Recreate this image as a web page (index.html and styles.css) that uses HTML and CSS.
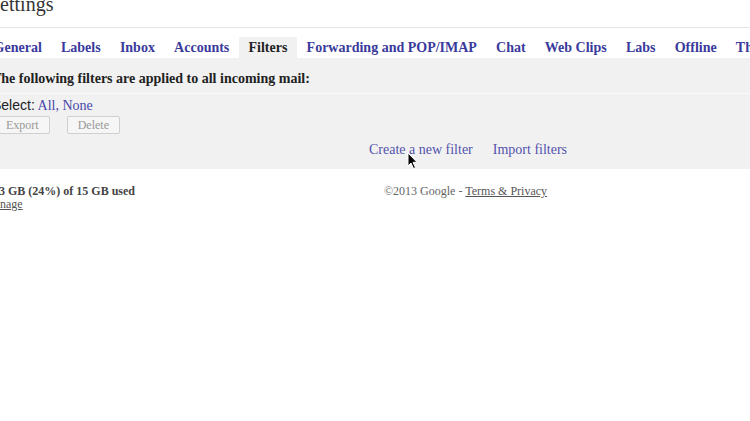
FILE: index.html
```html
<!DOCTYPE html>
<html lang="en">
<head>
    <meta charset="UTF-8">
    <title>Settings</title>
    <link rel="stylesheet" href="styles.css">
</head>
<body>
    <div class="page">
        <div class="header">
            <h1 class="title">Settings</h1>
        </div>

        <div class="tabs">
            <a class="tab">General</a>
            <a class="tab">Labels</a>
            <a class="tab">Inbox</a>
            <a class="tab">Accounts</a>
            <a class="tab active">Filters</a>
            <a class="tab">Forwarding and POP/IMAP</a>
            <a class="tab">Chat</a>
            <a class="tab">Web Clips</a>
            <a class="tab">Labs</a>
            <a class="tab">Offline</a>
            <a class="tab">Themes</a>
        </div>

        <div class="panel">
            <div class="panel-head">The following filters are applied to all incoming mail:</div>
            <div class="select-row">
                <span class="select-label">Select:</span>
                <a class="link">All</a>, <a class="link">None</a>
            </div>
            <div class="actions">
                <button class="btn" disabled>Export</button>
                <button class="btn" disabled>Delete</button>
            </div>
            <div class="filter-links">
                <a class="link">Create a new filter</a>
                <a class="link">Import filters</a>
            </div>
        </div>

        <div class="footer">
            <div class="usage">
                <div class="used">3.63 GB (24%) of 15 GB used</div>
                <a class="manage">Manage</a>
            </div>
            <div class="legal">&copy;2013 Google - <a class="terms">Terms &amp; Privacy</a></div>
        </div>
    </div>

    <!-- mouse pointer over the links -->
    <svg class="cursor" width="12" height="18" viewBox="0 0 12 18">
        <path d="M1 1 L1 14 L4 11 L6.5 16.5 L8.5 15.6 L6 10.3 L10 10.3 Z" fill="#000" stroke="#fff" stroke-width="1"/>
    </svg>
</body>
</html>
```

FILE: styles.css
```css
body {
    margin: 0;
    font-family: "Liberation Serif", "Times New Roman", serif;
    background: #fff;
    color: #222;
    overflow: hidden;
    width: 750px;
    height: 421px;
    position: relative;
}
.page {
    margin-left: -8px;
    width: 900px;
}
.header {
    display: flow-root;
    height: 27px;
    border-bottom: 1px solid #e6e6e6;
}
.title {
    margin: -6px 0 0 -3px;
    font-size: 20px;
    line-height: 20px;
    font-weight: normal;
    color: #333;
}
.tabs {
    display: flex;
    margin: 9px 0 0 -8px;
    white-space: nowrap;
}
.tab {
    padding: 0 9.6px;
    height: 21px;
    line-height: 21px;
    font-size: 14px;
    font-weight: bold;
    color: #3a3a9c;
}
.tab.active {
    background: #f1f1f1;
    color: #222;
}
.panel {
    background: #f1f1f1;
    height: 110px;
    padding-top: 1px;
}
.panel-head {
    font-size: 14px;
    font-weight: bold;
    color: #222;
    margin-top: 12px;
    padding-bottom: 6px;
    border-bottom: 1px solid #fafafa;
    line-height: 16px;
}
.select-row {
    font-size: 14px;
    line-height: 16px;
    margin-top: 3px;
    color: #4848a8;
}
.select-label {
    font-family: "Liberation Sans", Arial, sans-serif;
    font-size: 14px;
    color: #222;
}
.link {
    color: #4848a8;
}
.actions {
    display: flex;
    gap: 17px;
    margin: 2px 0 0 3px;
}
.btn {
    height: 18px;
    padding: 0 10px;
    font-family: "Liberation Serif", "Times New Roman", serif;
    font-size: 12px;
    color: #999;
    background: #f6f6f6;
    border: 1px solid #d0d0d0;
    border-radius: 2px;
}
.filter-links {
    display: flex;
    gap: 20px;
    margin: 8px 0 0 377px;
    font-size: 14px;
    line-height: 16px;
}
.filter-links .link {
    color: #5353ad;
}
.footer {
    display: grid;
    grid-template-columns: 400px auto;
    margin: 16px 0 0 -8px;
    font-size: 12px;
    line-height: 13px;
    color: #444;
}
.used {
    font-weight: bold;
}
.manage {
    color: #555;
    text-decoration: underline;
}
.legal {
    color: #666;
}
.terms {
    color: #555;
    text-decoration: underline;
}
.cursor {
    position: absolute;
    left: 407px;
    top: 152px;
}
```
